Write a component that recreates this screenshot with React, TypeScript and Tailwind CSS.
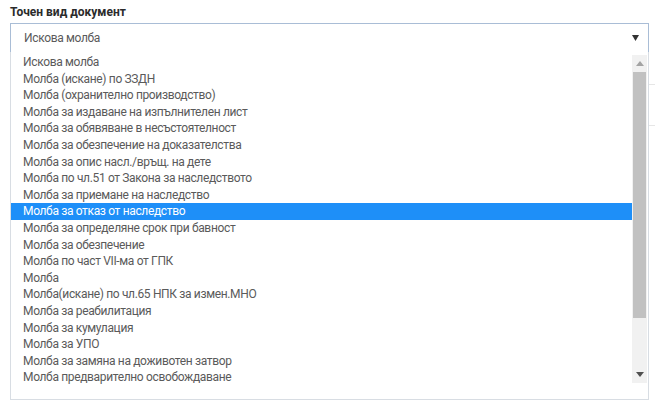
import React from "react";

const items = [
  "Искова молба",
  "Молба (искане) по ЗЗДН",
  "Молба (охранително производство)",
  "Молба за издаване на изпълнителен лист",
  "Молба за обявяване в несъстоятелност",
  "Молба за обезпечение на доказателства",
  "Молба за опис насл./връщ. на дете",
  "Молба по чл.51 от Закона за наследството",
  "Молба за приемане на наследство",
  "Молба за отказ от наследство",
  "Молба за определяне срок при бавност",
  "Молба за обезпечение",
  "Молба по част VII-ма от ГПК",
  "Молба",
  "Молба(искане) по чл.65 НПК за измен.МНО",
  "Молба за реабилитация",
  "Молба за кумулация",
  "Молба за УПО",
  "Молба за замяна на доживотен затвор",
  "Молба предварително освобождаване",
];

export default function App() {
  return (
    <div className="relative w-[655px] h-[407px] overflow-hidden bg-white font-['Roboto',sans-serif]">
      <div className="pl-[10px] pt-[3px]">
        <div className="text-[12px] leading-[18px] font-bold text-[#2b2b2b]">Точен вид документ</div>
        <div className="mt-[2px] w-[639px] h-[30px] border border-[#a9bdd6] flex items-center justify-between pl-[13px] pr-[9px] text-[12px] tracking-[-0.35px] text-[#5a5a5a]">
          <span>Искова молба</span>
          <svg width="7" height="6" viewBox="0 0 7 6"><path d="M0 0h7L3.5 6z" fill="#333" /></svg>
        </div>
        <div className="mt-[31px] border-t border-[#e6e6e6] w-[645px]" />
        <div className="mt-[40px] border-t border-[#e6e6e6] w-[645px]" />
      </div>

      <div className="absolute left-[10px] top-[52px] w-[639px] h-[348px] bg-white border-x border-b border-[#d8dde3] text-[12px] tracking-[-0.35px] text-[#5a5a5a]">
        <div className="pr-[16px] pt-[2px]">
          {items.map((t, i) => (
            <div
              key={i}
              className={
                "h-[16.6px] leading-[16.6px] pl-[12px] whitespace-nowrap " +
                (i === 9 ? "bg-[#1e8ff8] text-white" : "")
              }
            >
              {t}
            </div>
          ))}
        </div>
        <div className="absolute left-[621px] top-[3px] w-[15px] h-[328px] bg-[#f1f1f1] flex flex-col">
          <div className="h-[17px] flex items-center justify-center">
            <svg width="8" height="5" viewBox="0 0 8 5"><path d="M0 5h8L4 0z" fill="#a3a3a3" /></svg>
          </div>
          <div className="h-[246px] mx-[1px] bg-[#c1c1c1]" />
          <div className="flex-1" />
          <div className="h-[17px] flex items-center justify-center">
            <svg width="8" height="5" viewBox="0 0 8 5"><path d="M0 0h8L4 5z" fill="#505050" /></svg>
          </div>
        </div>
      </div>
    </div>
  );
}
